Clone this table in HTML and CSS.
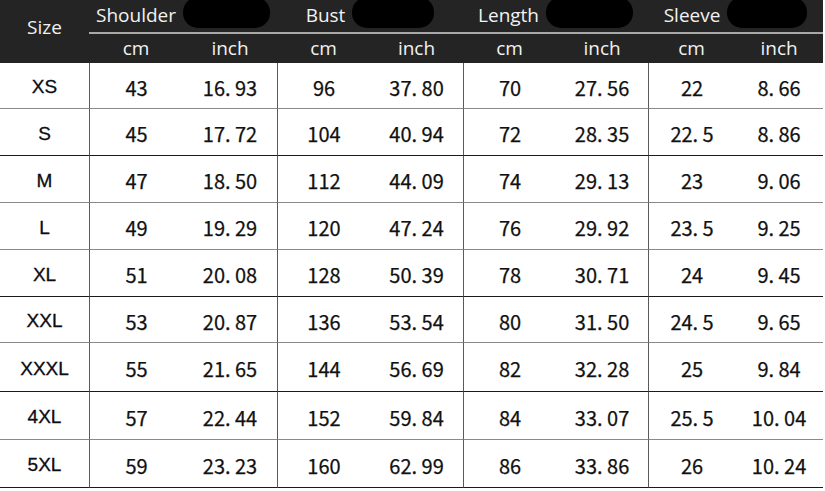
FILE: index.html
```html
<!DOCTYPE html>
<html>
<head>
<meta charset="utf-8">
<link rel="stylesheet" href="styles.css">
</head>
<body>
<table class="chart">
  <colgroup>
    <col class="c-size">
    <col class="c94"><col class="c94">
    <col class="c93"><col class="c93">
    <col class="c93"><col class="c92">
    <col class="c87"><col class="c88">
  </colgroup>
  <thead>
    <tr class="h1">
      <th rowspan="2" class="size-h">Size</th>
      <th colspan="2" class="grp"><div class="gh"><span>Shoulder</span><i class="blob b1"></i></div></th>
      <th colspan="2" class="grp"><div class="gh"><span>Bust</span><i class="blob b2"></i></div></th>
      <th colspan="2" class="grp"><div class="gh"><span>Length</span><i class="blob b3"></i></div></th>
      <th colspan="2" class="grp"><div class="gh"><span>Sleeve</span><i class="blob b4"></i></div></th>
    </tr>
    <tr class="h2">
      <th>cm</th><th>inch</th><th>cm</th><th>inch</th><th>cm</th><th>inch</th><th>cm</th><th>inch</th>
    </tr>
  </thead>
  <tbody>
    <tr class="r1 lg"><td class="sz">XS</td><td class="g">43</td><td>16. 93</td><td class="g">96</td><td>37. 80</td><td class="g">70</td><td>27. 56</td><td class="g">22</td><td>8. 66</td></tr>
    <tr class="r2 lb"><td class="sz">S</td><td class="g">45</td><td>17. 72</td><td class="g">104</td><td>40. 94</td><td class="g">72</td><td>28. 35</td><td class="g">22. 5</td><td>8. 86</td></tr>
    <tr class="r3 lg"><td class="sz">M</td><td class="g">47</td><td>18. 50</td><td class="g">112</td><td>44. 09</td><td class="g">74</td><td>29. 13</td><td class="g">23</td><td>9. 06</td></tr>
    <tr class="r4 lg"><td class="sz">L</td><td class="g">49</td><td>19. 29</td><td class="g">120</td><td>47. 24</td><td class="g">76</td><td>29. 92</td><td class="g">23. 5</td><td>9. 25</td></tr>
    <tr class="r5 lb"><td class="sz">XL</td><td class="g">51</td><td>20. 08</td><td class="g">128</td><td>50. 39</td><td class="g">78</td><td>30. 71</td><td class="g">24</td><td>9. 45</td></tr>
    <tr class="r6 lg"><td class="sz">XXL</td><td class="g">53</td><td>20. 87</td><td class="g">136</td><td>53. 54</td><td class="g">80</td><td>31. 50</td><td class="g">24. 5</td><td>9. 65</td></tr>
    <tr class="r7 lb"><td class="sz">XXXL</td><td class="g">55</td><td>21. 65</td><td class="g">144</td><td>56. 69</td><td class="g">82</td><td>32. 28</td><td class="g">25</td><td>9. 84</td></tr>
    <tr class="r8 lg"><td class="sz">4XL</td><td class="g">57</td><td>22. 44</td><td class="g">152</td><td>59. 84</td><td class="g">84</td><td>33. 07</td><td class="g">25. 5</td><td>10. 04</td></tr>
    <tr class="r9 lb"><td class="sz">5XL</td><td class="g">59</td><td>23. 23</td><td class="g">160</td><td>62. 99</td><td class="g">86</td><td>33. 86</td><td class="g">26</td><td>10. 24</td></tr>
  </tbody>
</table>
</body>
</html>
```
FILE: styles.css
```css
html, body {
  margin: 0;
  padding: 0;
  background: #ffffff;
}

.chart {
  border-collapse: separate;
  border-spacing: 0;
  table-layout: fixed;
  width: 823px;
}

.c-size { width: 89px; }
.c94 { width: 94px; }
.c93 { width: 93px; }
.c92 { width: 92px; }
.c87 { width: 87px; }
.c88 { width: 88px; }

thead th {
  background: #242424;
  color: #f2f2f2;
  font-family: "Open Sans", "Noto Sans", sans-serif;
  font-weight: 400;
  font-size: 19px;
  padding: 0;
  text-align: center;
  white-space: nowrap;
}

.size-h {
  vertical-align: top;
  padding-top: 18px;
  line-height: 1;
}

.h1 .grp {
  height: 32px;
  border-bottom: 2px solid #a8a8a8;
  overflow: hidden;
}

.gh {
  display: flex;
  justify-content: center;
  align-items: center;
  gap: 7px;
  height: 32px;
}

.gh span {
  line-height: 1;
  margin-top: -2px;
}

.blob {
  display: block;
  background: #000;
  border-radius: 15px;
  height: 31px;
  align-self: flex-start;
  margin-top: -3px;
}
.b1 { width: 87px; }
.b2 { width: 82px; }
.b3 { width: 87px; }
.b4 { width: 80px; }

.h2 th {
  height: 29px;
  line-height: 29px;
}

tbody td {
  font-family: "Noto Sans CJK SC", "Noto Sans", sans-serif;
  font-size: 20px;
  color: #111;
  -webkit-text-stroke: 0.25px #111;
  text-align: center;
  padding: 0;
  padding-top: 3px;
  white-space: nowrap;
}

tbody td.sz {
  font-family: "Liberation Sans", Arial, sans-serif;
  font-size: 19px;
  color: #0c0c14;
  -webkit-text-stroke: 0.3px #0c0c14;
}

tbody td.g {
  border-left: 1px solid #5a5a5a;
}

.lg td { border-bottom: 1px solid #8a8a8a; }
.lb td { border-bottom: 1px solid #1a1a1a; }

.r1 td { height: 42px; }
.r2 td, .r3 td, .r4 td, .r5 td { height: 43px; }
.r6 td { height: 42px; }
.r7 td { height: 45px; }
.r8 td, .r9 td { height: 44px; }
```
